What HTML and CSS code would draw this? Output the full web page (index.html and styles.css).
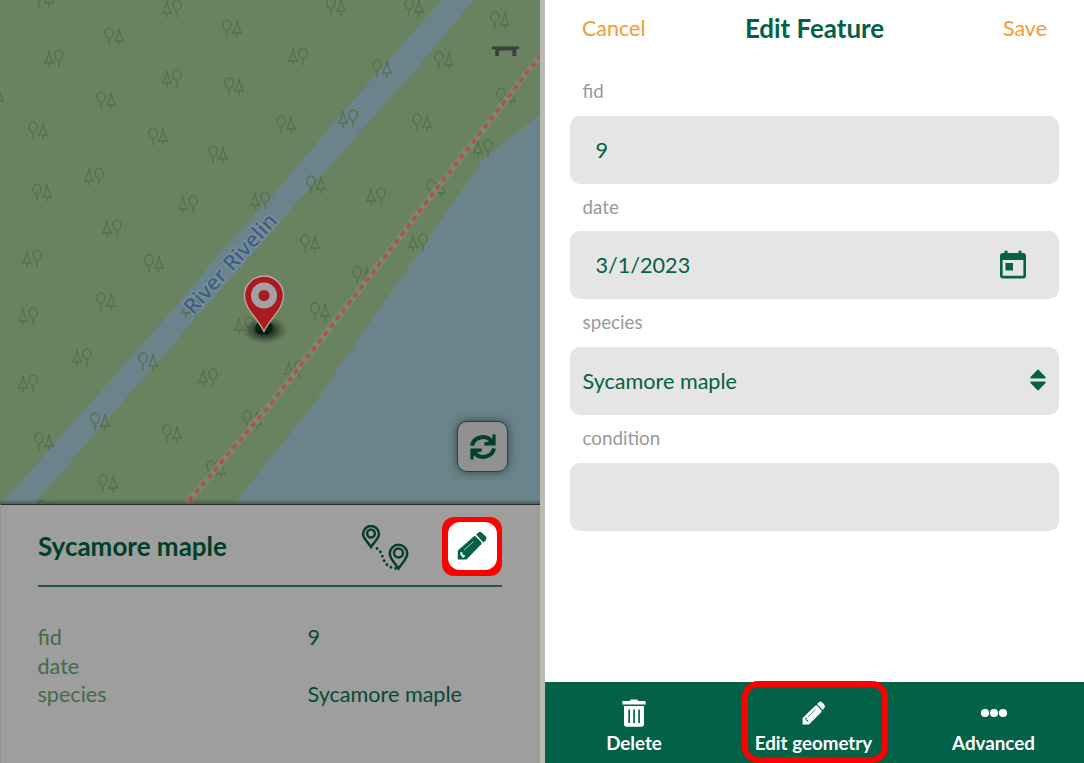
FILE: index.html
```html
<!DOCTYPE html>
<html lang="en">
<head>
<meta charset="utf-8">
<title>Edit Feature</title>
<link rel="stylesheet" href="styles.css">
</head>
<body>
<main class="screens">
  <section class="viewer">
    <div class="map">
      <svg class="map-art" viewBox="0 0 540 504" width="540" height="504">
        <defs>
          <g id="round"><path d="M5 12V18.500"/><ellipse cx="5" cy="6.200" rx="4.100" ry="5.200"/></g>
          <g id="pine"><path d="M5 14.500V18.500M5 1.500C5.500 6 7 10.500 9.300 14H.7C3 10.500 4.500 6 5 1.500Z"/></g>
          <g id="rp"><use href="#round"/><use href="#pine" x="10"/></g>
          <g id="pr"><use href="#pine"/><use href="#round" x="10"/></g>
          <radialGradient id="shade"><stop offset="0" stop-color="#10180f" stop-opacity=".95"/><stop offset=".45" stop-color="#202a1d" stop-opacity=".75"/><stop offset="1" stop-color="#3c4b36" stop-opacity="0"/></radialGradient>
        </defs>
        <rect width="540" height="504" fill="#69825f"/>
        <path d="M441 0H474L417 68L362 130L270 233L197 317L132 391L34 504H1L177 305L222 250L280 187L337 119L393 55Z" fill="#69848a"/>
        <path d="M540 114L484 158L420 250L313 405L234 504H540Z" fill="#69848a"/>
        <g class="trees">
          <use href="#rp" x="34" y="-11"/><use href="#pr" x="162" y="-1"/><use href="#rp" x="222" y="19"/><use href="#rp" x="104" y="27"/><use href="#pr" x="44" y="49"/><use href="#pr" x="162" y="69"/><use href="#rp" x="224" y="77"/><use href="#rp" x="-16" y="87"/><use href="#rp" x="96" y="91"/><use href="#rp" x="28" y="121"/><use href="#rp" x="148" y="127"/><use href="#rp" x="208" y="145"/><use href="#pr" x="84" y="167"/><use href="#rp" x="32" y="183"/><use href="#pr" x="178" y="195"/><use href="#pr" x="250" y="191"/><use href="#pr" x="102" y="219"/><use href="#pr" x="22" y="249"/><use href="#rp" x="144" y="254"/>
          <use href="#rp" x="326" y="-3"/><use href="#rp" x="404" y="-2"/><use href="#rp" x="490" y="11"/><use href="#pr" x="288" y="47"/><use href="#rp" x="372" y="59"/><use href="#rp" x="434" y="51"/><use href="#rp" x="496" y="87"/><use href="#pr" x="338" y="109"/><use href="#rp" x="276" y="115"/><use href="#rp" x="412" y="113"/><use href="#pr" x="473" y="139"/><use href="#rp" x="306" y="175"/><use href="#pr" x="366" y="187"/><use href="#rp" x="426" y="179"/><use href="#rp" x="300" y="234"/><use href="#pr" x="408" y="233"/>
          <use href="#rp" x="96" y="292"/><use href="#pr" x="18" y="307"/><use href="#pr" x="72" y="348"/><use href="#rp" x="138" y="352"/><use href="#pr" x="18" y="374"/><use href="#pr" x="198" y="368"/><use href="#rp" x="90" y="412"/><use href="#rp" x="34" y="432"/><use href="#rp" x="162" y="424"/><use href="#rp" x="98" y="474"/><use href="#rp" x="242" y="410"/><use href="#rp" x="206" y="460"/><use href="#pr" x="234" y="316"/><use href="#pr" x="181" y="299"/><use href="#rp" x="36" y="500"/><use href="#rp" x="352" y="266"/><use href="#rp" x="310" y="302"/><use href="#pr" x="284" y="360"/>
        </g>
        <path class="trail-bed" d="M541 55L477 137L437 188L385 257L270 405L186 504"/>
        <path class="trail" d="M541 55L477 137L437 188L385 257L270 405L186 504"/>
        <path d="M492 46.500H519V49.300H516.300V56H512.300V50.500H499V56H495.300V49.300H492Z" fill="#3c403b"/>
        <text class="river" transform="translate(193 315.500) rotate(-47.800)" textLength="127" lengthAdjust="spacingAndGlyphs">River Rivelin</text>
        <ellipse cx="265" cy="330" rx="23" ry="14" fill="url(#shade)"/>
        <ellipse cx="264" cy="328" rx="9" ry="7" fill="#001f0c"/>
        <path d="M264 331.500C257 317 244.500 309 244.500 295.500A19.500 19.500 0 0 1 283.500 295.500C283.500 309 271 317 264 331.500Z" fill="#aa1b1f" stroke="#bdaaa6" stroke-width="1.300"/>
        <circle cx="264" cy="295.500" r="9.300" fill="#aa1b1f" stroke="#a2a2a2" stroke-width="7.500"/>
      </svg>
      <button class="refresh" aria-label="Refresh">
        <svg viewBox="0 0 28 28" width="28" height="28"><g fill="none" stroke="#003f2a" stroke-width="4"><path d="M3 12.700A11 10.500 0 0 1 22.500 8.200"/><path d="M25 15.300A11 10.500 0 0 1 5.500 19.800"/></g><path d="M26.600 1.500V12.500H15.300V9.500L20 8.500L23.500 5V1.500ZM1.400 26.500V15.500H12.700V18.500L8 19.500L4.500 23V26.500Z" fill="#003f2a"/></svg>
      </button>
    </div>
    <div class="details">
      <header class="details-head">
        <h2>Sycamore maple</h2>
        <svg class="route" viewBox="0 0 48 46" width="48" height="46"><g fill="none" stroke="#073f2b" stroke-width="2.500"><path d="M10 22C7 17 2 13.500 2 9A8 8 0 0 1 18 9C18 13.500 13 17 10 22Z"/><circle cx="10" cy="8.500" r="3.900"/><path d="M37.500 43.500C34 38 28.800 34 28.800 28.500A8.700 8.700 0 0 1 46.200 28.500C46.200 34 41 38 37.500 43.500Z"/><circle cx="37.500" cy="28" r="4.500"/><path d="M16 23.500C20 25.500 21 31 23 35.500C26 41.500 31 43.500 38 43.500" stroke-dasharray=".1 4.700" stroke-linecap="round" stroke-width="2.800"/></g></svg>
        <button class="edit" aria-label="Edit">
          <span class="edit-face"><svg viewBox="0 0 30 30" width="30" height="30"><g fill="#036148"><path d="M.8 19.500L17 5.300Q18 4.800 18.900 5.700L24.300 11.300Q25 12.200 24.200 13.200L9.500 28.500H.8Z"/><path d="M19.100 3.600L21.500 1.400Q23 0 24.600 1.400L29 5.800Q30 7.400 29 9L26.400 11.500Z"/></g><path d="M7 19L16.500 10.700" stroke="#9ec6b7" stroke-width="1"/><path d="M3.600 20.800L5.500 21.700L5.500 23.500L7.600 24L7.800 25.800L6 27L3.200 23.500Z" fill="#fff"/></svg></span>
        </button>
      </header>
      <dl class="attributes">
        <dt>fid</dt><dd>9</dd>
        <dt>date</dt><dd></dd>
        <dt>species</dt><dd>Sycamore maple</dd>
      </dl>
    </div>
  </section>

  <section class="editor">
    <header class="editor-head">
      <span class="action">Cancel</span>
      <h1>Edit Feature</h1>
      <span class="action save">Save</span>
    </header>
    <div class="form">
      <div class="field"><span class="label">fid</span><div class="input padded">9</div></div>
      <div class="field"><span class="label">date</span><div class="input padded">3/1/2023
        <svg class="calendar" viewBox="0 0 28 30" width="28" height="30"><path fill-rule="evenodd" d="M4 3H5.500V.8H8.500V3H19.500V.8H22.500V3H24Q27 3 27 6V25.500Q27 28.500 24 28.500H4Q1 28.500 1 25.500V6Q1 3 4 3ZM3.600 10V25.700H24.400V10ZM6.500 13H14V20.500H6.500Z" fill="#036148"/></svg></div></div>
      <div class="field"><span class="label">species</span><div class="input">Sycamore maple
        <svg class="sort" viewBox="0 0 16 22" width="16" height="22"><path d="M8 .3L15.500 8Q16.200 9.400 14.700 9.500H1.300Q-.2 9.400.5 8ZM8 21.700L15.500 14Q16.200 12.600 14.700 12.500H1.300Q-.2 12.600.5 14Z" fill="#036148"/></svg></div></div>
      <div class="field"><span class="label">condition</span><div class="input"></div></div>
    </div>
    <footer class="toolbar">
      <div class="tool">
        <svg viewBox="0 0 24 28" width="24" height="28"><path fill-rule="evenodd" d="M1 2H7.500L9 .5H15L16.500 2H23Q23.700 2 23.700 3V5.500H.3V3Q.3 2 1 2ZM2 7H22V25Q22 27.700 19.500 27.700H4.500Q2 27.700 2 25ZM6.300 10.500V24H8V10.500ZM11.200 10.500V24H12.900V10.500ZM16.200 10.500V24H17.900V10.500Z" fill="#fff"/></svg>
        <span>Delete</span>
      </div>
      <div class="tool highlighted">
        <svg viewBox="0 0 24 28" width="24" height="28"><g fill="#fff"><path d="M.6 19L13.600 6.500Q14.500 6 15.300 6.800L19.400 11.500Q20 12.400 19.200 13.200L7 25.500H.6Z"/><path d="M15 5L17.200 3Q18.500 2 20 3.100L22.500 5.900Q23.500 7.500 22.400 8.900L20.800 10.900Z"/></g><path d="M5.500 18.500L13.500 10.300" stroke="#036148" stroke-width=".7"/><path d="M3 18.700L4.700 19.300L4.700 20.800L6.200 21.300L6.200 22.800L4.200 21.500Z" fill="#036148"/></svg>
        <span>Edit geometry</span>
      </div>
      <div class="tool">
        <svg viewBox="0 0 28 28" width="28" height="28"><g fill="#fff"><circle cx="5" cy="14" r="4.100"/><circle cx="14" cy="14" r="4.100"/><circle cx="23" cy="14" r="4.100"/></g></svg>
        <span>Advanced</span>
      </div>
    </footer>
  </section>
</main>
</body>
</html>
```
FILE: styles.css
```css
* { box-sizing: border-box; }
body { margin: 0; font-family: Lato, "Liberation Sans", sans-serif; color: #036148; background: #fff; }
h1, h2, dl, dd { margin: 0; }
button { padding: 0; font: inherit; }
svg { display: block; flex: none; }

.screens { display: grid; grid-template-columns: 540px 539px; column-gap: 5px; width: 1084px; height: 763px; overflow: hidden; background: #bbbaae; }

.viewer { display: grid; grid-template-rows: 504px 259px; }
.map { position: relative; overflow: hidden; }
.map::after { content: ""; position: absolute; left: 0; right: 0; bottom: 0; height: 5px; background: linear-gradient(transparent, rgba(50, 55, 55, .5)); }
.trees { fill: none; stroke: #56704e; stroke-width: 1.3; }
.trail-bed { fill: none; stroke: #7a8972; stroke-width: 6.5; }
.trail { fill: none; stroke: #aa554d; stroke-width: 4; stroke-dasharray: 5.2 4.5; }
.river { font: 500 21px "Noto Sans", sans-serif; fill: #3d5d85; stroke: #8195a0; stroke-width: 3px; stroke-opacity: .7; paint-order: stroke; }
.refresh { position: absolute; left: 457px; top: 421px; width: 51px; height: 51px; display: grid; place-items: center; border: 1.5px solid #174c3c; border-radius: 10px; background: #919191; box-shadow: 0 0 8px rgba(30, 40, 40, .7); }

.details { padding: 12px 38px 0; border-top: 1px solid #292c2b; border-left: 1px solid #929292; background: #9e9e9e; }
.details-head { display: flex; align-items: center; width: 464px; height: 70px; margin-left: -1px; border-bottom: 2px solid #28573f; }
.details-head h2 { flex: 1; padding-bottom: 11px; font-size: 26px; line-height: 30px; font-weight: 700; color: #004029; }
.route { margin: 0 33px 7px 0; }
.edit { width: 60px; height: 59px; margin: 0 0 10px; padding: 5.5px; border: 0; border-radius: 12px; background: #f00; }
.edit-face { display: grid; place-items: center; width: 100%; height: 100%; border-radius: 12px; background: #fff; }
.attributes { display: grid; grid-template-columns: 270px 1fr; grid-auto-rows: 28.7px; margin: 36px 0 0 -1.5px; font-size: 21.6px; line-height: 28.7px; white-space: nowrap; }
.attributes dt { color: #426b49; }
.attributes dd { color: #084a34; }

.editor { display: flex; flex-direction: column; background: #fff; }
.editor-head { display: grid; grid-template-columns: 1fr auto 1fr; align-items: center; height: 55px; padding: 0 37px; }
.editor-head h1 { font-size: 25.9px; line-height: 30px; font-weight: 700; }
.action { color: #f79a35; font-size: 21.5px; }
.save { text-align: right; }
.form { flex: 1; padding: 20px 25.500px 0 25px; }
.field { height: 115.7px; }
.label { display: block; height: 40.500px; padding-left: 12.500px; font-size: 18.800px; line-height: 31px; color: #999; }
.input { display: flex; align-items: center; justify-content: space-between; height: 68px; padding: 0 13px 0 12.500px; border-radius: 10px; background: #e5e5e5; font-size: 21.600px; }
.padded { padding-left: 25.500px; padding-right: 32px; }
.calendar, .sort { margin-bottom: 1px; }

.toolbar { display: grid; grid-template-columns: 178px 1fr 181px; height: 81px; background: #036148; color: #fff; font-size: 18.800px; font-weight: 700; white-space: nowrap; }
.tool { display: flex; flex-direction: column; align-items: center; gap: 4px; padding-top: 17px; line-height: 24px; }
.highlighted { width: 146px; height: 82px; margin: -1px auto 0 18.500px; padding: 12px 2px 0 0; border: 6px solid #f00; border-radius: 16px; }
```
